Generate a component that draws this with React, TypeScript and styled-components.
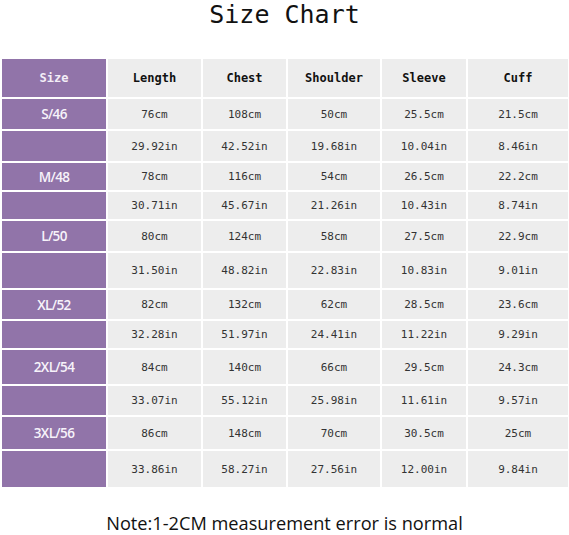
import React from "react";
import styled, { createGlobalStyle } from "styled-components";

const Global = createGlobalStyle`
  html, body { margin: 0; padding: 0; background: #ffffff; }
  body { width: 569px; height: 535px; overflow: hidden; }
`;

const Page = styled.div`
  width: 569px;
  height: 535px;
  display: flex;
  flex-direction: column;
  align-items: center;
  background: #ffffff;
`;

const Title = styled.h1`
  margin: 0;
  height: 61px;
  font-family: "DejaVu Sans Mono", monospace;
  font-weight: normal;
  font-size: 25px;
  line-height: 29px;
  color: #111;
  text-align: center;
  width: 100%;
  box-sizing: border-box;
`;

const Table = styled.div`
  margin-left: 2px;
  align-self: flex-start;
  width: 566px;
  display: grid;
  grid-template-columns: 104px 93px 83px 92px 84px 100px;
  grid-template-rows: 38px 30px 30px 27px 27px 30px 35px 29px 27px 34px 29px 32px 36px;
  gap: 2px;
  background: #ffffff;
`;

type Variant = "size" | "head" | "label" | "data";

const Cell = styled.div<{ $v: Variant }>`
  display: flex;
  align-items: center;
  justify-content: center;
  white-space: nowrap;
  background: ${(p) => (p.$v === "size" || p.$v === "label" ? "#9174a9" : "#ededed")};
  color: ${(p) =>
    p.$v === "size" ? "#f3eef7" : p.$v === "label" ? "#f7f3fa" : p.$v === "head" ? "#111" : "#333"};
  font-family: ${(p) =>
    p.$v === "label" ? '"Open Sans", sans-serif' : '"DejaVu Sans Mono", monospace'};
  font-weight: ${(p) => (p.$v === "data" ? "normal" : p.$v === "label" ? 600 : "bold")};
  font-size: ${(p) => (p.$v === "data" ? "11px" : p.$v === "label" ? "13.5px" : "12px")};
  letter-spacing: ${(p) => (p.$v === "label" ? "-0.6px" : "0")};
`;

const Note = styled.div`
  margin-top: 24px;
  font-family: "Open Sans", sans-serif;
  font-size: 18.2px;
  color: #111;
`;

const headers = ["Length", "Chest", "Shoulder", "Sleeve", "Cuff"];

const sizes: { label: string; cm: string[]; inch: string[] }[] = [
  { label: "S/46", cm: ["76cm", "108cm", "50cm", "25.5cm", "21.5cm"], inch: ["29.92in", "42.52in", "19.68in", "10.04in", "8.46in"] },
  { label: "M/48", cm: ["78cm", "116cm", "54cm", "26.5cm", "22.2cm"], inch: ["30.71in", "45.67in", "21.26in", "10.43in", "8.74in"] },
  { label: "L/50", cm: ["80cm", "124cm", "58cm", "27.5cm", "22.9cm"], inch: ["31.50in", "48.82in", "22.83in", "10.83in", "9.01in"] },
  { label: "XL/52", cm: ["82cm", "132cm", "62cm", "28.5cm", "23.6cm"], inch: ["32.28in", "51.97in", "24.41in", "11.22in", "9.29in"] },
  { label: "2XL/54", cm: ["84cm", "140cm", "66cm", "29.5cm", "24.3cm"], inch: ["33.07in", "55.12in", "25.98in", "11.61in", "9.57in"] },
  { label: "3XL/56", cm: ["86cm", "148cm", "70cm", "30.5cm", "25cm"], inch: ["33.86in", "58.27in", "27.56in", "12.00in", "9.84in"] },
];

export default function App() {
  return (
    <Page>
      <Global />
      <Title>Size Chart</Title>
      <Table>
        <Cell $v="size">Size</Cell>
        {headers.map((h) => (
          <Cell key={h} $v="head">{h}</Cell>
        ))}
        {sizes.map((s) => (
          <React.Fragment key={s.label}>
            <Cell $v="label">{s.label}</Cell>
            {s.cm.map((v, i) => (
              <Cell key={"c" + i} $v="data">{v}</Cell>
            ))}
            <Cell $v="label" />
            {s.inch.map((v, i) => (
              <Cell key={"i" + i} $v="data">{v}</Cell>
            ))}
          </React.Fragment>
        ))}
      </Table>
      <Note>Note:1-2CM measurement error is normal</Note>
    </Page>
  );
}
